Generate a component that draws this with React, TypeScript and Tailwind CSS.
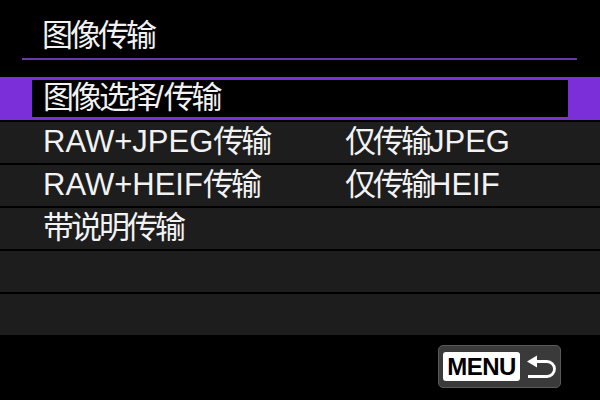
import React from 'react';

const font = { fontFamily: '"Liberation Sans", "Noto Sans CJK SC", sans-serif' };

// CJK glyphs in the camera font are narrower than Noto's, so tighten only those runs
function Label({ text }: { text: string }) {
  const parts = text.split(/([\u4e00-\u9fff]+)/).filter(Boolean);
  return (
    <span className="whitespace-nowrap">
      {parts.map((p, i) =>
        /[\u4e00-\u9fff]/.test(p) ? (
          <span key={i} className="tracking-[-3px]">
            {p}
          </span>
        ) : (
          <span key={i}>{p}</span>
        ),
      )}
    </span>
  );
}

const rows: { left: string; right?: string }[] = [
  { left: 'RAW+JPEG传输', right: '仅传输JPEG' },
  { left: 'RAW+HEIF传输', right: '仅传输HEIF' },
  { left: '带说明传输' },
  { left: '' },
  { left: '' },
];

function BackArrow() {
  return (
    <svg width="31" height="24" viewBox="0 0 31 24" fill="none">
      <polygon points="1,6.5 11,0.5 11,12.5" fill="#fff" />
      <path d="M10 6.5 H21 A7.5 7.5 0 0 1 21 21.5 H2" stroke="#fff" strokeWidth="2.8" />
    </svg>
  );
}

export default function App() {
  return (
    <div className="w-[600px] h-[400px] bg-black text-[#f2f2f2] overflow-hidden" style={font}>
      <div className="pt-[17px] pl-[42px] text-[31px] leading-[38px]">
        <Label text="图像传输" />
      </div>
      <div className="mt-[3px] ml-[22px] mr-[23px] h-[2px] bg-[#6b3aa6]" />

      <div className="mt-[17px] h-[43px] bg-[#7b2fd8] px-[32px] py-[3px]">
        <div className="h-full bg-black flex items-center pl-[11px] text-[31px]">
          <Label text="图像选择/传输" />
        </div>
      </div>

      {rows.map((r, i) => (
        <div key={i} className="mt-[2px] h-[41px] bg-[#1d1d1d] flex items-center text-[31px]">
          <div className="pl-[43px] w-[345px]">
            <Label text={r.left} />
          </div>
          {r.right && <Label text={r.right} />}
        </div>
      ))}

      <div className="mt-[10px] flex justify-end pr-[39px]">
        <div className="w-[123px] h-[43px] rounded-[5px] bg-[#3a3a3a] border border-[#5a5a5a] flex items-center pl-[4px] gap-[6px]">
          <div className="w-[77px] h-[29px] rounded-[3px] bg-white flex items-center justify-center text-black font-bold text-[24px] leading-none tracking-[-0.5px]">
            MENU
          </div>
          <BackArrow />
        </div>
      </div>
    </div>
  );
}
